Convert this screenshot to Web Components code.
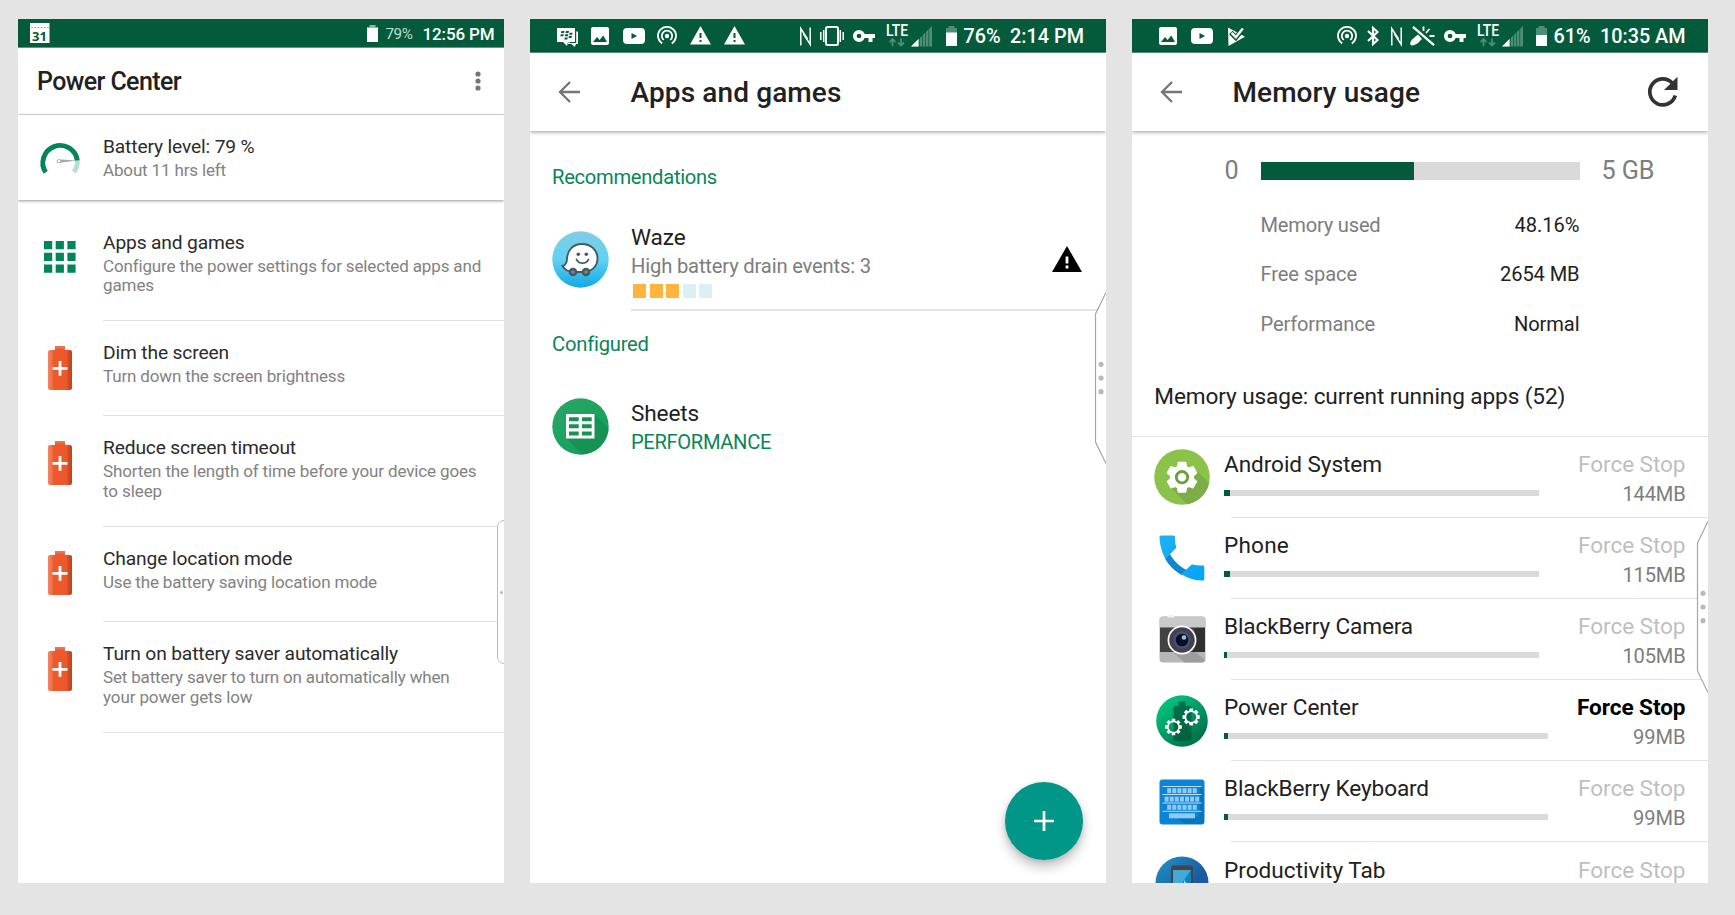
<!DOCTYPE html>
<html lang="en">
<head>
<meta charset="utf-8">
<title>Power Center</title>
<style>
html,body{margin:0;height:100%;background:#e4e4e4}
body{font-family:Roboto,"Liberation Sans",sans-serif;color:#212121;overflow:hidden}
</style>
</head>
<body>
<power-gallery></power-gallery>
<script>
const fits = new Set();

function gear(cx, cy, ro, ri, n, a = .2, b = .3) {
  const pts = [], step = Math.PI * 2 / n;
  for (let i = 0; i < n; i++) {
    const t = -Math.PI / 2 + i * step;
    for (const [r, o] of [[ri, -b], [ro, -a], [ro, a], [ri, b]])
      pts.push((cx + r * Math.cos(t + o)).toFixed(2) + ',' + (cy + r * Math.sin(t + o)).toFixed(2));
  }
  return 'M' + pts.join('L') + 'Z';
}
function keys(y, n, w, x0, step) {
  let s = '';
  for (let i = 0; i < n; i++) s += `<rect x="${x0 + i * step}" y="${y}" width="${w}" height="5"/>`;
  return `<g fill="#90caf9">${s}</g>`;
}
const battery = level => `<path fill="#4d8d77" d="M2.500 0h6v2H11v18H0V2h2.500z"/><path fill="#fff" d="M0 ${20 - level}h11V20H0z"/>`;

/* name: [width, height, markup] */
const ICONS = {
  calendar: [20, 20, `<path fill="#fff" d="M0 0h19.500v20H0z"/><path stroke="#8fb8a8" stroke-dasharray="2 1.2" d="M1 4.500h18"/><text x="9.500" y="17.500" font-size="13" font-weight="700" font-family="Open Sans,sans-serif" text-anchor="middle" fill="#045b3b">31</text>`],
  batt79: [11, 17, `<path fill="#8db9a9" d="M2.500 0h6v2H11v2H0V2h2.500z"/><path fill="#fff" d="M0 3h11v14H0z"/>`],
  batt76: [11, 20, battery(13.5)],
  batt61: [11, 20, battery(11)],
  bbm: [21, 19, `<path fill="#fff" d="M0 0h18v14h-5l-1 1-1-1-1 4-4-4H0z"/><path fill="#fff" d="M19.200 3.500H21V16h-2l-1.300 3-3.200-3H11v-1h8.200z"/><g fill="#045b3b"><path d="M4.500 3h3l-.5 2H4zM9 3h3l-.5 2h-3zM3.800 6.300h3l-.5 2h-3zM8.300 6.300h3l-.5 2h-3zM12.600 4.800h3l-.5 2h-3zM7.800 9.400h3l-.5 2h-3zM12 8h3l-.5 2h-3z"/></g>`],
  image: [18, 18, `<rect width="18" height="18" rx="2" fill="#fff"/><path fill="#045b3b" d="M2 15l4-5 2.600 3 3.600-4.600L16 15z"/>`],
  youtube: [22, 16, `<rect width="22" height="16" rx="4" fill="#fff"/><path fill="#045b3b" d="M8.500 5l5.600 3-5.600 3z"/>`],
  cast: [20, 19, `<g fill="none" stroke="#fff" stroke-width="1.800"><path d="M5.200 17.400A9 9 0 1 1 14.800 17.400"/><path d="M6.800 13.900A5.200 5.200 0 1 1 13.200 13.900"/></g><circle cx="10" cy="10" r="2.200" fill="#fff"/>`],
  warn: [21, 18.5, `<path fill="#fff" d="M10.500 0L21 18.500H0z"/><path fill="#045b3b" d="M9.500 7h2v5h-2zM9.500 14h2v2h-2z"/>`],
  nfc: [11, 19, `<path fill="none" stroke="#fff" stroke-width="1.500" d="M.8 18.500V1.500L7.500 12M10.200 .5v17L3.500 7"/>`],
  vibrate: [24, 20, `<rect x="6" y="1" width="12" height="18" rx="1.500" fill="none" stroke="#fff" stroke-width="2"/><path stroke="#fff" stroke-width="1.500" d="M3.700 4v12M.8 6v8M20.300 4v12M23.200 6v8"/>`],
  key: [22, 12, `<circle cx="6" cy="6" r="4.200" fill="none" stroke="#fff" stroke-width="3.700"/><path fill="#fff" d="M10 4h12v4h-2.500v4h-4V8H10z"/>`],
  lte: [22, 23, `<text x="0" y="12.200" font-size="16" font-weight="500" textLength="22" lengthAdjust="spacingAndGlyphs" fill="#fff">LTE</text><path fill="none" stroke="#4d8d77" stroke-width="1.800" d="M6.500 22v-6.500M3.600 18l2.900-3 2.900 3M15 14.500v6.500M12.100 18.500l2.900 3 2.900-3"/>`],
  signal: [21, 20.5, `<path fill="#4d8d77" d="M0 20.500L21 0v20.500z"/><path fill="#fff" d="M0 20.500L7.500 13v7.500z"/><path stroke="#045b3b" stroke-width=".7" d="M8.500 5v16M11.500 3v18M14.500 2v19M17.700 1v20"/>`],
  play: [17, 19, `<path fill="#fff" d="M0 .5L17 9.800 .5 19z"/><path fill="none" stroke="#045b3b" stroke-width="5" d="M2.800 5.500l5 5L16.500 0"/><path fill="none" stroke="#fff" stroke-width="2.400" d="M3.600 5.800l4.300 4.400L14.800 1.500"/>`],
  bluetooth: [12, 20, `<path fill="none" stroke="#fff" stroke-width="2.100" d="M1 5l9.500 9L6 18.200V1.800L10.500 6 1 15"/>`],
  mute: [25, 20, `<path fill="#fff" d="M0 18c1-5 5-6.500 8-9.500l4 4.500c-3 2.500-5 6.500-10.500 6.500z"/><path stroke="#fff" stroke-width="2.300" d="M3 .8l21 18.400"/><path stroke="#fff" stroke-width="1.800" d="M13.500 .5v4.500M19.500 3l-3.500 4M24.500 10h-5"/>`],
  back: [22, 22, `<path fill="none" stroke="#757575" stroke-width="2.300" d="M22 11H2M12 1L2 11l10 10"/>`],
  refresh: [31, 31, `<path fill="none" stroke="#333" stroke-width="3.700" d="M28.300 19.500A13 13 0 1 1 25.300 7"/><path fill="#333" d="M30.500 .8V14H17z"/>`],
  dots: [6, 20, `<g fill="#757575"><circle cx="3" cy="3" r="2.600"/><circle cx="3" cy="10" r="2.600"/><circle cx="3" cy="17" r="2.600"/></g>`],
  gauge: [40, 34, `<path fill="none" stroke="#b6dfd0" stroke-width="4.800" d="M37.300 19.500A17.500 17.500 0 0 1 34 31"/><path fill="none" stroke="#028557" stroke-width="4.900" d="M5.700 31.300A17.300 17.300 0 1 1 37.300 19.500"/><path fill="#a9a9a9" d="M18 18.300L37 19.400 20 21.800a2 1.700 0 0 1-2-3.500z"/><circle cx="19" cy="20" r="1.200" fill="#fff"/>`],
  grid: [32, 32, `<path fill="#028557" d="M0 0h8.200v8.200H0zM11.700 0h8.200v8.200h-8.200zM23.400 0h8.200v8.200h-8.200zM0 11.800h8.200V20H0zM11.700 11.800h8.200V20h-8.200zM23.400 11.800h8.200V20h-8.200zM0 23.500h8.200v8.200H0zM11.700 23.500h8.200v8.200h-8.200zM23.400 23.500h8.200v8.200h-8.200z"/>`],
  saver: [24, 44, `<defs><clipPath id="c"><path d="M7 0h10v4h5q2 0 2 2v36q0 2-2 2H2q-2 0-2-2V6q0-2 2-2h5z"/></clipPath><linearGradient id="g"><stop stop-color="#f5835f"/><stop offset=".14" stop-color="#f27350"/><stop offset=".24" stop-color="#ee592b"/><stop offset=".76" stop-color="#ee592b"/><stop offset=".86" stop-color="#d04c24"/><stop offset="1" stop-color="#bd4320"/></linearGradient></defs><g clip-path="url(#c)"><path fill="url(#g)" d="M0 0h24v44H0z"/><path fill="#f0714d" d="M7 0h10v2.500H7z"/></g><path stroke="#fff" stroke-width="2.800" d="M4.500 22.300h15M12 15v14.700"/>`],
  waze: [57, 57, `<defs><linearGradient id="g" x2="0" y2="1"><stop stop-color="#82cde5"/><stop offset=".5" stop-color="#60d2f3"/><stop offset="1" stop-color="#12a8e4"/></linearGradient></defs><circle cx="28.500" cy="28.500" r="28.200" fill="url(#g)"/><path fill="#fff" stroke="#455a5f" stroke-width="1.900" d="M30 13c9 0 15.500 6.200 15.500 14.500S39 41 31 41H22c-5 0-9.500-2.500-11.500-6 3-.7 4.300-2.500 4.500-7C15.300 19 21 13 30 13z"/><g fill="#46585d"><circle cx="21" cy="41" r="4.300"/><circle cx="34" cy="41" r="4.300"/></g><circle cx="21" cy="41" r="1.800" fill="#78868a"/><circle cx="34" cy="41" r="1.800" fill="#78868a"/><circle cx="26.300" cy="23.300" r="1.800" fill="#455a5f"/><circle cx="34.300" cy="23.300" r="1.800" fill="#455a5f"/><path fill="none" stroke="#455a5f" stroke-width="1.700" stroke-linecap="round" d="M24.500 28.300c2.500 5.200 9.500 5.200 12 0"/>`],
  sheets: [57, 57, `<defs><linearGradient id="g" x2="1" y2="1"><stop stop-color="#2aa866"/><stop offset="1" stop-color="#0f9d58"/></linearGradient><clipPath id="k"><circle cx="28.500" cy="28.500" r="28.200"/></clipPath></defs><g clip-path="url(#k)"><path fill="url(#g)" d="M0 0h57v57H0z"/><path fill="#169254" d="M42 16l20 20v30H40L14 40z"/></g><path fill="#fff" d="M14 16h28.500v24.500H14z"/><path fill="#169255" d="M17 19.300h9.700v4H17zM30 19.300h9.700v4H30zM17 26.300h9.700v4H17zM30 26.300h9.700v4H30zM17 33.500h9.700v4H17zM30 33.500h9.700v4H30z"/>`],
  alert: [30, 26, `<path d="M15 0l15 26H0z"/><path fill="#fff" d="M13.600 10.500h2.800v7h-2.800zM13.600 19.500h2.800v3h-2.800z"/>`],
  plus: [20, 20, `<path stroke="#fff" stroke-width="2.700" d="M0 10h20M10 0v20"/>`],
  android: [56, 56, `<defs><clipPath id="k"><circle cx="28" cy="28" r="27.800"/></clipPath></defs><g clip-path="url(#k)"><path fill="#8bc34a" d="M0 0h56v56H0z"/><path fill="#7cad46" d="M39 18l20 20v20H36L14 36z"/></g><path fill="#fff" stroke="#fff" stroke-width="1.500" stroke-linejoin="round" d="${gear(28, 28.2, 15.2, 11.3, 6, .24, .4)}"/><circle cx="28" cy="28.200" r="5.700" fill="none" stroke="#689f38" stroke-width="2.800"/>`],
  phone: [46, 46, `<defs><linearGradient id="g" x2="1" y2="1"><stop stop-color="#1fb0f6"/><stop offset="1" stop-color="#03a5f4"/></linearGradient></defs><path fill="#1086d3" d="M11 19c3.500 6.500 9 12.200 16.500 16l-5 5C14 35 9 29 6 23.500z"/><path fill="url(#g)" d="M2 .5h12.300q1.700 0 1.700 1.700c0 3.500 0 6.500 1.500 10.300L6.500 24C2.500 17 .5 8 .5 2Q.5 .5 2 .5zM44 30.500q1.300 0 1.300 1.500v12q0 1.500-1.300 1.500c-8 0-15-2-21.700-6.300L33 29.300c3.500 1.200 7 1.200 11 1.200z"/>`],
  camera: [47, 49, `<rect x=".5" y="2.500" width="46" height="46" rx="3.500" fill="#b6b6b6"/><path fill="#c9c9c9" d="M4 2.500h39q3.500 0 3.500 3.500v7.500H.5V6q0-3.500 3.500-3.500z"/><path fill="#f2f2f2" d="M8.500 .5h7v3h-7z"/><path fill="#424242" d="M1 13.500h45v24.500H1z"/><path fill="#303030" d="M36 14h10v24H34z"/><path fill="#9d9d9d" d="M14 38h22l10 8q-1 2.500-3.500 2.500h-17z"/><circle cx="23" cy="26" r="13.600" fill="#414151" stroke="#fff" stroke-width="1.700"/><circle cx="23" cy="26" r="8.700" fill="#4e4e74"/><circle cx="23" cy="26" r="6.300" fill="#071027"/><circle cx="25" cy="23.500" r="2.300" fill="#80ccd4"/>`],
  power: [52, 52, `<defs><linearGradient id="g" x1=".1" x2=".9" y2="1"><stop stop-color="#00cf86"/><stop offset="1" stop-color="#006443"/></linearGradient></defs><circle cx="26" cy="26" r="25.800" fill="url(#g)"/><path fill="#00583d" opacity=".75" d="M22.500 6.500h7V11H34q1.500 0 1.500 1.500V44q0 2-2 2h-14q-2 0-2-2V12.500Q17.500 11 19 11h3.500z"/><path fill="#fff" fill-rule="evenodd" d="${gear(17.5, 32, 8.5, 6.3, 8, .2, .3)}M17.500 27.200a4.800 4.800 0 1 0 .01 0z${gear(35.2, 22, 8.8, 6.6, 8, .2, .3)}M35.200 17a5 5 0 1 0 .01 0z"/>`],
  keyboard: [46, 46, `<rect x=".5" y=".5" width="45" height="45" rx="3" fill="#0b83d6"/><path fill="#0876bd" d="M41 7l4 4v31q0 3-3 3H26l-9-7h23z"/><path stroke="#bbdefb" stroke-width="1" d="M3.500 7.500h39M3.500 15.500h39M3.500 24h39M3.500 32.300h39"/>${keys(9.2, 6, 4, 8.2, 5.1)}${keys(17.6, 7, 4, 5.6, 5.1)}${keys(25.8, 6, 4, 8.2, 5.1)}<path fill="#90caf9" d="M10 34.300h26v5H10z"/>`],
  tab: [54, 54, `<defs><linearGradient id="g" x2="1" y2="1"><stop stop-color="#2196c9"/><stop offset=".6" stop-color="#1a5aa0"/></linearGradient></defs><circle cx="27" cy="27" r="26.500" fill="url(#g)"/><rect x="16" y="9.500" width="22" height="36" rx="2.500" fill="#454545"/><path fill="#42a9d8" d="M18 14h18v26H18z"/><path fill="#0b84c0" d="M36 14v13h-9z"/><path fill="#fff" d="M29 24l4 6h-3z"/>`]
};

class UiIcon extends HTMLElement {
  connectedCallback() {
    if (this.shadowRoot) return;
    const [w, h, body] = ICONS[this.getAttribute('name')];
    this.attachShadow({ mode: 'open' }).innerHTML = `<style>:host{display:block;flex:none;width:${w}px;height:${h}px}svg{display:block;overflow:visible}</style><svg width="${w}" height="${h}" viewBox="0 0 ${w} ${h}">${body}</svg>`;
  }
}

/* One line of text whose tracking is adjusted to the advance width given in "w". */
class FitText extends HTMLElement {
  connectedCallback() {
    if (this.shadowRoot) return;
    this.attachShadow({ mode: 'open' }).innerHTML = `<style>:host{display:block;white-space:nowrap}span{display:inline-block}</style><span><slot></slot></span>`;
    fits.add(this);
  }
  fit() {
    const w = +this.getAttribute('w'), span = this.shadowRoot.querySelector('span');
    if (!w) return;
    const n = this.textContent.length;
    span.style.letterSpacing = ((w - span.getBoundingClientRect().width) / n).toFixed(3) + 'px';
  }
}

/* Items are placed in a row; each one carries its own leading gap. */
class StatusBar extends HTMLElement {
  connectedCallback() {
    if (this.shadowRoot) return;
    this.attachShadow({ mode: 'open' }).innerHTML = `<style>
      :host{display:flex;align-items:flex-start;box-sizing:border-box;height:34px;background:#045b3b;border-bottom:1px solid #5c9a84;color:#fff;flex:none;font-size:19.800px;line-height:24px;font-weight:500}
      :host([small]){height:29px}
    </style><slot></slot>`;
  }
}

class AppHeader extends HTMLElement {
  connectedCallback() {
    if (this.shadowRoot) return;
    this.attachShadow({ mode: 'open' }).innerHTML = `<style>
      :host{display:flex;align-items:center;height:78px;flex:none;box-sizing:border-box;padding:0 30px 0 28px;background:#fff;font-size:28px;font-weight:500;line-height:34px;box-shadow:0 1px 4px rgba(0,0,0,.42);position:relative;z-index:1}
      .t{margin:2px auto 0 50.500px}
      slot[name=action]{display:block;margin-top:-1px}
    </style><ui-icon name="back"></ui-icon><div class="t"><slot></slot></div><slot name="action"></slot>`;
  }
}

class PhoneScreen extends HTMLElement {
  connectedCallback() {
    if (this.shadowRoot) return;
    this.attachShadow({ mode: 'open' }).innerHTML = `<style>:host{display:flex;flex-direction:column;height:864px;background:#fff;overflow:hidden;position:relative}</style><slot></slot>`;
  }
}

/* Pull-out tab that overlaps the right edge of a screen. */
class EdgeTab extends HTMLElement {
  connectedCallback() {
    if (this.shadowRoot) return;
    this.attachShadow({ mode: 'open' }).innerHTML = `<style>:host{position:absolute;right:0;top:var(--top);z-index:2}svg{display:block}</style><svg width="12" height="172"><path d="M12 .5L1.500 22v128L12 171.500z" fill="#fff" stroke="none"/><path d="M12 .5L1.500 22v128L12 171.500" fill="none" stroke="#a6a6a6" stroke-width="1.200"/><g fill="#b9b9b9"><circle cx="7" cy="72.300" r="2.600"/><circle cx="7" cy="86" r="2.600"/><circle cx="7" cy="99.700" r="2.600"/></g></svg>`;
  }
}

class PrefRow extends HTMLElement {
  connectedCallback() {
    if (this.shadowRoot) return;
    this.attachShadow({ mode: 'open' }).innerHTML = `<style>
      :host{display:flex;height:95.100px;flex:none}
      :host([tall]){height:110.700px}
      .i{width:85px;display:flex;justify-content:center;align-items:flex-start;padding:var(--ip,24.500px) 1px 0 0;box-sizing:border-box;flex:none}
      .b{flex:1;border-bottom:1.400px solid #e0e0e0;box-sizing:border-box;padding-top:21px}
      :host([plain]) .b{border:0}
      .t{font-size:19.200px;line-height:22px;color:#2b2b2b}
      .s{font-size:17px;line-height:19.400px;color:#828282;margin-top:3.100px}
    </style><div class="i"><ui-icon name="${this.getAttribute('icon')}"></ui-icon></div><div class="b"><div class="t"><slot name="title"></slot></div><div class="s"><slot></slot></div></div>`;
  }
}

class PowerScreen extends HTMLElement {
  connectedCallback() {
    if (this.shadowRoot) return;
    this.attachShadow({ mode: 'open' }).innerHTML = `<style>
      :host{display:block;width:486px}
      .head{display:flex;height:66.500px;box-sizing:border-box;border-bottom:1.500px solid #dcdcdc;flex:none;padding:0 23px 0 19px;justify-content:space-between;font-size:25px;font-weight:500;line-height:30px}
      .head fit-text{margin-top:18.600px}
      .head ui-icon{margin-top:22.500px}
      .level{height:85.500px;flex:none;box-shadow:0 1px 3px rgba(0,0,0,.42)}
      .level pref-row{height:85px}
      .gap{height:10.500px;flex:none}
      .tab{position:absolute;right:-9px;top:501px;width:14px;height:142px;border:1.300px solid #bcbcbc;border-radius:7px;background:#fff;display:flex;align-items:center}
      .tab i{width:3px;height:3px;border-radius:2px;background:#b5b5b5;margin-left:2px}
    </style>
    <phone-screen>
      <status-bar small>
        <ui-icon name="calendar" style="margin:4px 0 0 11.700px"></ui-icon>
        <ui-icon name="batt79" style="margin:6px 0 0 317.300px"></ui-icon>
        <fit-text w="27" style="margin:3px 0 0 7.500px;font-size:15.200px;font-weight:400;color:#c3dbd2">79%</fit-text>
        <fit-text w="72" style="margin:3.300px 0 0 10px;font-size:17px">12:56 PM</fit-text>
      </status-bar>
      <div class="head"><fit-text w="144">Power Center</fit-text><ui-icon name="dots"></ui-icon></div>
      <div class="level"><pref-row plain icon="gauge" style="--ip:26.500px"><fit-text slot="title" w="151.500">Battery level: 79 %</fit-text><fit-text w="123">About 11 hrs left</fit-text></pref-row></div>
      <div class="gap"></div>
      <pref-row tall icon="grid" style="--ip:30px"><fit-text slot="title" w="141.500">Apps and games</fit-text><fit-text w="377.500">Configure the power settings for selected apps and</fit-text><fit-text w="51">games</fit-text></pref-row>
      <pref-row icon="saver"><fit-text slot="title" w="126">Dim the screen</fit-text><fit-text w="242">Turn down the screen brightness</fit-text></pref-row>
      <pref-row tall icon="saver"><fit-text slot="title" w="193">Reduce screen timeout</fit-text><fit-text w="373.500">Shorten the length of time before your device goes</fit-text><fit-text w="59">to sleep</fit-text></pref-row>
      <pref-row icon="saver"><fit-text slot="title" w="189.300">Change location mode</fit-text><fit-text w="274">Use the battery saving location mode</fit-text></pref-row>
      <pref-row tall icon="saver"><fit-text slot="title" w="295">Turn on battery saver automatically</fit-text><fit-text w="346.500">Set battery saver to turn on automatically when</fit-text><fit-text w="149.500">your power gets low</fit-text></pref-row>
      <div class="tab"><i></i></div>
    </phone-screen>`;
  }
}

class AppsScreen extends HTMLElement {
  connectedCallback() {
    if (this.shadowRoot) return;
    this.attachShadow({ mode: 'open' }).innerHTML = `<style>
      :host{display:block;width:576px}
      h2{margin:0 0 0 22px;font-size:20.200px;font-weight:400;line-height:24px;color:#0a8558;flex:none}
      .row{display:flex;flex:none;padding-left:22px}
      .main{flex:1;margin-left:22px;box-sizing:border-box}
      .n{font-size:22.600px;line-height:26px}
      .s{font-size:20.200px;line-height:24px;color:#7d7d7d;margin-top:3px}
      .meter{display:flex;gap:3.500px;margin:6px 0 0 2px}
      .meter i{width:13px;height:14px;background:#ffb43d}
      .meter i.off{background:#dceff5}
      .main.line,.warn{border-bottom:2px solid #e4e4e4}
      .warn{padding:19.500px 24px 0 0}
      .fab{position:absolute;right:23px;bottom:23px;width:78px;height:78px;border-radius:50%;background:#009688;display:flex;align-items:center;justify-content:center;box-shadow:0 7px 12px rgba(0,0,0,.24),0 1px 4px rgba(0,0,0,.12)}
    </style>
    <phone-screen>
      <status-bar>
        <ui-icon name="bbm" style="margin:9px 0 0 27px"></ui-icon>
        <ui-icon name="image" style="margin:8px 0 0 13px"></ui-icon>
        <ui-icon name="youtube" style="margin:9px 0 0 13.500px"></ui-icon>
        <ui-icon name="cast" style="margin:7px 0 0 12.500px"></ui-icon>
        <ui-icon name="warn" style="margin:7px 0 0 13px"></ui-icon>
        <ui-icon name="warn" style="margin:7px 0 0 13px"></ui-icon>
        <ui-icon name="nfc" style="margin:7.500px 0 0 55px"></ui-icon>
        <ui-icon name="vibrate" style="margin:7px 0 0 9px"></ui-icon>
        <ui-icon name="key" style="margin:11px 0 0 9px"></ui-icon>
        <ui-icon name="lte" style="margin:5px 0 0 11px"></ui-icon>
        <ui-icon name="signal" style="margin:6.500px 0 0 3px"></ui-icon>
        <ui-icon name="batt76" style="margin:7px 0 0 13.500px"></ui-icon>
        <fit-text w="37" style="margin:6px 0 0 7px">76%</fit-text>
        <fit-text w="74" style="margin:6px 0 0 9.500px">2:14 PM</fit-text>
      </status-bar>
      <app-header><fit-text w="211">Apps and games</fit-text></app-header>
      <h2 style="margin-top:34px"><fit-text w="165">Recommendations</fit-text></h2>
      <div class="row" style="margin-top:37px;height:85px">
        <ui-icon name="waze" style="margin-top:5px"></ui-icon>
        <div class="main line">
          <div class="n" style="margin-top:-1.200px"><fit-text w="54.500">Waze</fit-text></div>
          <div class="s"><fit-text w="240">High battery drain events: 3</fit-text></div>
          <div class="meter"><i></i><i></i><i></i><i class="off"></i><i class="off"></i></div>
        </div>
        <div class="warn"><ui-icon name="alert"></ui-icon></div>
      </div>
      <h2 style="margin-top:21px"><fit-text w="96">Configured</fit-text></h2>
      <div class="row" style="margin-top:42.300px">
        <ui-icon name="sheets"></ui-icon>
        <div class="main"><div class="n" style="margin-top:2.500px"><fit-text w="68">Sheets</fit-text></div><div class="s" style="color:#0a8558"><fit-text w="140">PERFORMANCE</fit-text></div></div>
      </div>
      <edge-tab style="--top:273px"></edge-tab>
      <div class="fab"><ui-icon name="plus"></ui-icon></div>
    </phone-screen>`;
  }
}

class MemStat extends HTMLElement {
  connectedCallback() {
    if (this.shadowRoot) return;
    this.attachShadow({ mode: 'open' }).innerHTML = `<style>:host{display:flex;justify-content:space-between;height:49.650px;font-size:20.100px;line-height:24px;color:#7d7d7d}.v{color:#212121}</style><slot></slot><div class="v"><slot name="value"></slot></div>`;
  }
}

class AppRow extends HTMLElement {
  connectedCallback() {
    if (this.shadowRoot) return;
    const g = k => this.getAttribute(k);
    const on = this.hasAttribute('active');
    this.attachShadow({ mode: 'open' }).innerHTML = `<style>
      :host{display:flex;height:81.100px;flex:none}
      .i{width:92px;flex:none;display:flex;justify-content:center;align-items:flex-start;padding:${g('top')}px 0 0 8.300px;box-sizing:border-box}
      .m{flex:1;display:grid;grid-template-columns:1fr auto;grid-template-rows:47px 1fr;padding-right:22.500px;position:relative;line-height:26px;font-size:22.600px}
      .m::after{content:"";position:absolute;left:7px;right:0;bottom:0;height:1.300px;background:#e2e2e2}
      .n,.f{padding-top:15.300px}
      .f{color:${on ? '#000;font-weight:700' : '#bfbfbf'};text-align:right}
      .bar{height:6px;margin:6px 0 0 .2px;width:${g('bar')}px;background:#dadada;font-size:0}
      .bar i{display:block;height:6px;width:${g('fill')}px;background:#045b3b}
      .s{font-size:20.100px;color:#7d7d7d;text-align:right;justify-self:end;line-height:24px;margin-top:-1.700px}
    </style><div class="i"><ui-icon name="${g('icon')}"></ui-icon></div>
    <div class="m"><div class="n"><fit-text w="${g('nw')}">${g('name')}</fit-text></div><div class="f"><fit-text w="${on ? 108.5 : 107.5}">Force Stop</fit-text></div><div class="bar"><i></i></div>${g('size') ? `<div class="s"><fit-text w="${g('sw')}">${g('size')}</fit-text></div>` : ''}</div>`;
  }
}

class MemoryScreen extends HTMLElement {
  connectedCallback() {
    if (this.shadowRoot) return;
    this.attachShadow({ mode: 'open' }).innerHTML = `<style>
      :host{display:block;width:576px}
      .total{display:flex;align-items:center;height:30px;flex:none;margin-top:25px;font-size:25.200px;line-height:30px;color:#7d7d7d;padding-left:92.500px}
      .total .bar{width:319px;height:18px;background:#dadada;margin:0 22px 0 22px}
      .total .bar i{display:block;width:153px;height:18px;background:#045b3b}
      .stats{margin:26.500px 128.500px 0 128.500px;flex:none;height:151px}
      .cap{flex:none;font-size:22.600px;line-height:26px;padding:0 0 25.800px 22.300px;border-bottom:1.300px solid #e2e2e2;margin-top:20.500px}
    </style>
    <phone-screen>
      <status-bar>
        <ui-icon name="image" style="margin:8px 0 0 27px"></ui-icon>
        <ui-icon name="youtube" style="margin:9px 0 0 14px"></ui-icon>
        <ui-icon name="play" style="margin:7.500px 0 0 14.500px"></ui-icon>
        <ui-icon name="cast" style="margin:7px 0 0 92px"></ui-icon>
        <ui-icon name="bluetooth" style="margin:7px 0 0 10.500px"></ui-icon>
        <ui-icon name="nfc" style="margin:7.500px 0 0 12px"></ui-icon>
        <ui-icon name="mute" style="margin:6.500px 0 0 8px"></ui-icon>
        <ui-icon name="key" style="margin:11px 0 0 8.500px"></ui-icon>
        <ui-icon name="lte" style="margin:5px 0 0 11px"></ui-icon>
        <ui-icon name="signal" style="margin:6.500px 0 0 3px"></ui-icon>
        <ui-icon name="batt61" style="margin:7px 0 0 13.500px"></ui-icon>
        <fit-text w="37" style="margin:6px 0 0 6.500px">61%</fit-text>
        <fit-text w="85.500" style="margin:6px 0 0 9.500px">10:35 AM</fit-text>
      </status-bar>
      <app-header><fit-text w="187.500">Memory usage</fit-text><ui-icon slot="action" name="refresh"></ui-icon></app-header>
      <div class="total"><fit-text w="14">0</fit-text><div class="bar"><i></i></div><fit-text w="53">5 GB</fit-text></div>
      <div class="stats">
        <mem-stat><fit-text w="120">Memory used</fit-text><fit-text slot="value" w="65">48.16%</fit-text></mem-stat>
        <mem-stat><fit-text w="96.500">Free space</fit-text><fit-text slot="value" w="79.500">2654 MB</fit-text></mem-stat>
        <mem-stat><fit-text w="114.500">Performance</fit-text><fit-text slot="value" w="65.500">Normal</fit-text></mem-stat>
      </div>
      <div class="cap"><fit-text w="411">Memory usage: current running apps (52)</fit-text></div>
      <app-row icon="android" top="12" name="Android System" nw="158" size="144MB" sw="63" bar="315" fill="6"></app-row>
      <app-row icon="phone" top="17.500" name="Phone" nw="65" size="115MB" sw="63" bar="315" fill="6"></app-row>
      <app-row icon="camera" top="15" name="BlackBerry Camera" nw="189" size="105MB" sw="63" bar="315" fill="3.300"></app-row>
      <app-row icon="power" top="14.500" name="Power Center" nw="134.500" size="99MB" sw="52.500" bar="323.500" fill="3.500" active></app-row>
      <app-row icon="keyboard" top="17.500" name="BlackBerry Keyboard" nw="205" size="99MB" sw="52.500" bar="323.500" fill="3.500"></app-row>
      <app-row icon="tab" top="14" name="Productivity Tab" nw="161.500" bar="323.500" fill="3.500"></app-row>
      <edge-tab style="--top:502px"></edge-tab>
    </phone-screen>`;
  }
}

class PowerGallery extends HTMLElement {
  connectedCallback() {
    if (this.shadowRoot) return;
    this.attachShadow({ mode: 'open' }).innerHTML = `<style>:host{display:flex;gap:26px;padding:19px 0 32px 18px;box-sizing:border-box;height:915px;width:1735px}</style><power-screen></power-screen><apps-screen></apps-screen><memory-screen></memory-screen>`;
  }
}

for (const [tag, cls] of Object.entries({
  'ui-icon': UiIcon, 'fit-text': FitText, 'status-bar': StatusBar, 'app-header': AppHeader,
  'phone-screen': PhoneScreen, 'edge-tab': EdgeTab, 'pref-row': PrefRow, 'mem-stat': MemStat,
  'app-row': AppRow, 'power-screen': PowerScreen, 'apps-screen': AppsScreen,
  'memory-screen': MemoryScreen, 'power-gallery': PowerGallery
})) customElements.define(tag, cls);

fits.forEach(el => el.fit());
</script>
</body>
</html>
